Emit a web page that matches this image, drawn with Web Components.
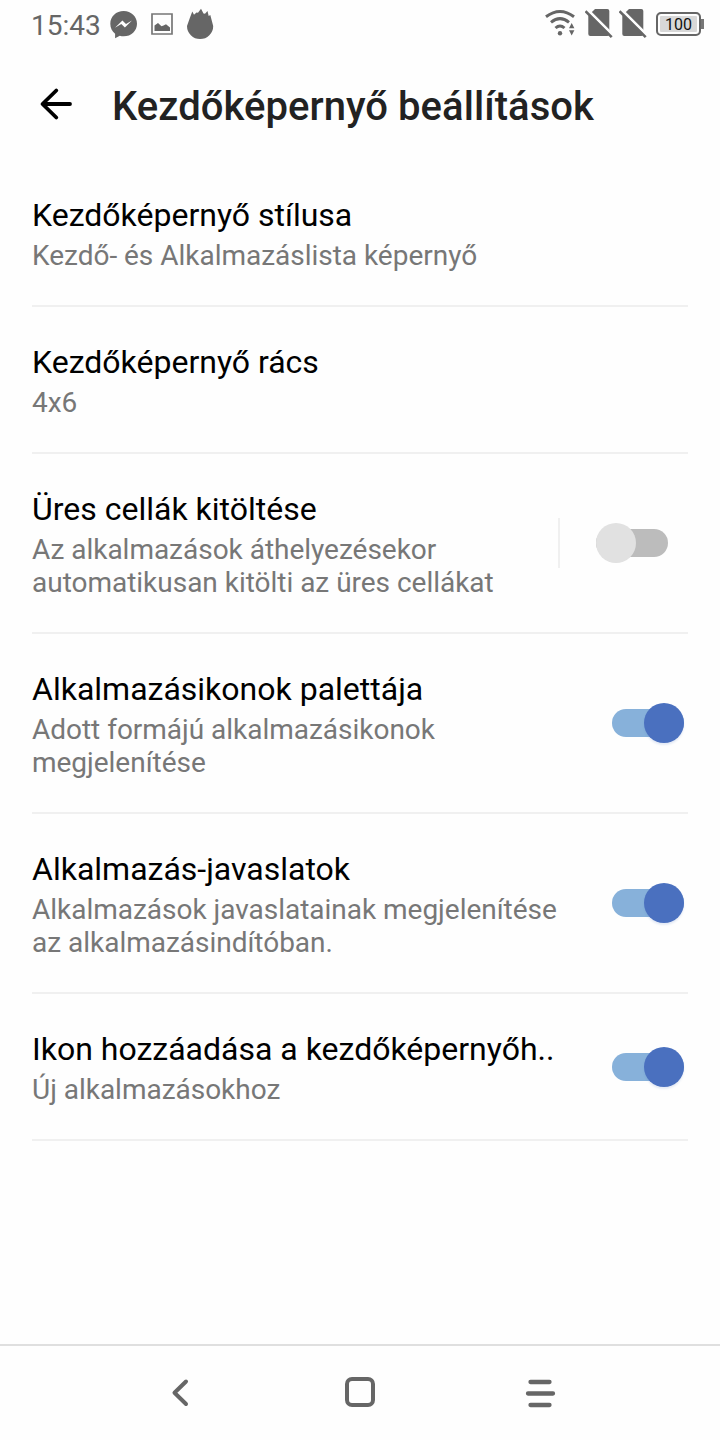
<!DOCTYPE html>
<html lang="hu">
<head>
<meta charset="utf-8">
<title>Kezdőképernyő beállítások</title>
<style>
  body {
    margin: 0;
    background-color: #fefefe;
    font-family: Roboto, "Noto Sans", sans-serif;
  }
</style>
</head>
<body>
<settings-screen></settings-screen>

<script>
const statusStyles = `
  <style>
    :host {
      display: flex;
      align-items: center;
      box-sizing: border-box;
      height: 48px;
      padding-left: 31px;
      padding-right: 16px;
      color: #666;
    }

    svg {
      display: block;
      flex: none;
      height: 48px;
      fill: #666;
    }

    .clock {
      width: 77px;
      font-size: 28px;
      line-height: 48px;
      padding-top: 2px;
      box-sizing: border-box;
      height: 48px;
    }

    .space {
      flex: 1;
    }

    .wifi {
      margin-right: 5px;
    }

    .battery {
      display: flex;
      align-items: center;
      margin-left: 3px;
    }

    .battery-body {
      box-sizing: border-box;
      width: 45px;
      height: 24px;
      border: 2px solid #666;
      border-radius: 5px;
      background: #d8d8d8;
      box-shadow: inset 0 0 0 2px #fefefe;
      color: #111;
      font-size: 16px;
      line-height: 21px;
      text-align: center;
    }

    .battery-cap {
      width: 3px;
      height: 10px;
      background: #777;
    }
  </style>
`;

class StatusBar extends HTMLElement {
  constructor() {
    super();
    this.root = this.attachShadow({ mode: 'open' });
    this.renderHTML();
  }

  renderHTML() {
    const noSim = `
      <svg width="34" viewBox="0 0 34 48">
        <path d="M10 9h12.300q2 0 2 2v23q0 2-2 2h-17q-2 0-2-2v-18.500z"/>
        <path d="M1 8.200l29 29" stroke="#fefefe" stroke-width="3"/>
        <path d="M0.500 11.200l26.200 26" stroke="#666" stroke-width="2.600"/>
      </svg>
    `;

    this.root.innerHTML = `
      ${statusStyles}
      <span class="clock">15:43</span>
      <svg width="34" viewBox="108 0 34 48">
        <path d="M123.700 11c-7.600 0-13.400 5.500-13.400 12.700 0 4.200 1.800 7.600 4.800 10v4.600l4.700-2.500c1.200.4 2.500.5 3.900.5 7.500 0 13.300-5.500 13.300-12.600s-5.800-12.700-13.300-12.700z"/>
        <path fill="#fefefe" d="M115 27.800l7.400-7.400 3.600 3.700 6-3.700-7.100 7.100-3.600-3.600z"/>
      </svg>
      <svg width="44" viewBox="142 0 44 48">
        <path fill="none" stroke="#777" stroke-width="1.700" d="M152 14h20v20h-20z"/>
        <path d="M154.500 31v-5.500l3.500-2.500 3.500 3.200 2-.8 2.500-1.200 4 3.300v3.500z"/>
      </svg>
      <svg width="30" viewBox="186 0 30 48">
        <path d="M187 26L190 17.500L192.300 11.500L194 14.800L196.500 12.500L198 12.800L201 8.800L203.500 13.500L205 13.800L207.500 11L208.700 16L210.300 15L213.200 26A13.100 13.100 0 0 1 187 26z"/>
      </svg>
      <span class="space"></span>
      <svg class="wifi" width="36" viewBox="544 0 36 48">
        <g fill="none" stroke="#666">
          <path stroke-width="3" d="M546 16.800q14-10.600 28 0"/>
          <path stroke-width="3" d="M551 22.300q9-7.400 18 0"/>
          <path stroke-width="3" d="M555.500 28q4.500-4 9 0"/>
        </g>
        <circle cx="560" cy="33.200" r="2.200"/>
        <path d="M569 28.200l2.700-5.200 2.700 5.200zM569 30.200h5.400l-2.700 5.200z"/>
      </svg>
      ${noSim}
      ${noSim}
      <div class="battery">
        <div class="battery-body">100</div>
        <div class="battery-cap"></div>
      </div>
    `;
  }
}

const headerStyles = `
  <style>
    :host {
      display: flex;
      align-items: center;
      height: 112px;
      padding-left: 36px;
    }

    svg {
      display: block;
      width: 40px;
      height: 40px;
      margin-right: 36px;
    }

    h1 {
      margin: 5px 0 0;
      font-size: 40px;
      font-weight: 500;
      line-height: 48px;
      letter-spacing: 0.05px;
      color: #222;
      white-space: nowrap;
    }
  </style>
`;

class ScreenHeader extends HTMLElement {
  constructor() {
    super();
    this.root = this.attachShadow({ mode: 'open' });
    this.renderHTML();
  }

  renderHTML() {
    this.root.innerHTML = `
      ${headerStyles}
      <svg viewBox="0 0 40 40">
        <path d="M20.300 6.500l-13.800 13.500 13.800 13.500M7 20h27" fill="none" stroke="#000" stroke-width="3.800" stroke-linecap="round" stroke-linejoin="round"/>
      </svg>
      <h1><slot></slot></h1>
    `;
  }
}

const switchStyles = `
  <style>
    :host {
      display: flex;
      align-items: center;
      flex: none;
      width: 72px;
      height: 40px;
      --track: #bcbcbc;
      --thumb: #e1e1e1;
    }

    :host([on]) {
      --track: #87b1da;
      --thumb: #4a70bf;
    }

    .track {
      display: flex;
      align-items: center;
      width: 72px;
      height: 28px;
      border-radius: 14px;
      background-color: var(--track);
    }

    .thumb {
      width: 40px;
      height: 40px;
      flex: none;
      border-radius: 50%;
      background-color: var(--thumb);
    }

    :host([on]) .thumb {
      margin-left: auto;
      box-shadow: 0 2px 2px rgba(74, 112, 191, 0.14);
    }
  </style>
`;

class ToggleSwitch extends HTMLElement {
  constructor() {
    super();
    this.root = this.attachShadow({ mode: 'open' });
    this.renderHTML();
  }

  renderHTML() {
    this.root.innerHTML = `
      ${switchStyles}
      <div class="track"><div class="thumb"></div></div>
    `;
  }
}

const rowStyles = `
  <style>
    :host {
      display: flex;
      align-items: center;
      margin-left: 32px;
      margin-right: 32px;
      padding-top: 36px;
      padding-bottom: 33px;
      border-bottom: 2px solid #f0f0f0;
    }

    .texts {
      width: 532px;
      flex: none;
    }

    .title {
      font-size: 32px;
      line-height: 38px;
      color: #000;
      white-space: nowrap;
    }

    .summary {
      margin-top: 5px;
      font-size: 28px;
      line-height: 33px;
      letter-spacing: -0.02px;
      color: #777;
    }

    .control {
      display: flex;
      align-items: center;
      flex: 1;
      margin-top: -3px;
    }

    ::slotted(toggle-switch) {
      margin: 0 4px 0 auto;
    }

    :host([split]) .texts {
      width: 526px;
    }

    :host([split]) .control {
      box-sizing: border-box;
      height: 50px;
      padding-right: 16px;
      border-left: 2px solid #f0f0f0;
    }
  </style>
`;

class SettingRow extends HTMLElement {
  constructor() {
    super();
    this.root = this.attachShadow({ mode: 'open' });
    this.renderHTML();
  }

  renderHTML() {
    this.root.innerHTML = `
      ${rowStyles}
      <div class="texts">
        <div class="title"><slot name="title"></slot></div>
        <div class="summary"><slot name="summary"></slot></div>
      </div>
      <div class="control"><slot></slot></div>
    `;
  }
}

const navStyles = `
  <style>
    :host {
      display: flex;
      justify-content: center;
      box-sizing: border-box;
      height: 96px;
      border-top: 2px solid #dfdfdf;
    }

    svg {
      display: block;
      width: 180px;
      height: 94px;
      fill: none;
      stroke: #666;
      stroke-width: 4;
      stroke-linecap: round;
      stroke-linejoin: round;
    }
  </style>
`;

class NavigationBar extends HTMLElement {
  constructor() {
    super();
    this.root = this.attachShadow({ mode: 'open' });
    this.renderHTML();
  }

  renderHTML() {
    this.root.innerHTML = `
      ${navStyles}
      <svg viewBox="0 0 180 94">
        <path d="M96 35.500l-11.500 11.300 11.500 11.200"/>
      </svg>
      <svg viewBox="0 0 180 94">
        <rect x="77" y="33" width="26" height="26" rx="5"/>
      </svg>
      <svg viewBox="0 0 180 94">
        <path d="M80.500 36h19M78 47.500h25M80.500 59h19" stroke-width="4.300"/>
      </svg>
    `;
  }
}

const screenStyles = `
  <style>
    :host {
      display: flex;
      flex-direction: column;
      width: 720px;
      height: 1440px;
      overflow: hidden;
    }

    main {
      flex: 1;
    }
  </style>
`;

const settings = [
  { title: 'Kezdőképernyő stílusa', summary: 'Kezdő- és Alkalmazáslista képernyő' },
  { title: 'Kezdőképernyő rács', summary: '4x6' },
  {
    title: 'Üres cellák kitöltése',
    summary: 'Az alkalmazások áthelyezésekor automatikusan kitölti az üres cellákat',
    toggle: 'off',
    split: true,
  },
  {
    title: 'Alkalmazásikonok palettája',
    summary: 'Adott formájú alkalmazásikonok megjelenítése',
    toggle: 'on',
  },
  {
    title: 'Alkalmazás-javaslatok',
    summary: 'Alkalmazások javaslatainak megjelenítése az alkalmazásindítóban.',
    toggle: 'on',
  },
  { title: 'Ikon hozzáadása a kezdőképernyőh..', summary: 'Új alkalmazásokhoz', toggle: 'on' },
];

class SettingsScreen extends HTMLElement {
  constructor() {
    super();
    this.root = this.attachShadow({ mode: 'open' });
    this.renderHTML();
  }

  renderHTML() {
    const rowsHTML = settings.reduce((acc, row) => {
      acc += `
        <setting-row ${row.split ? 'split' : ''}>
          <span slot="title">${row.title}</span>
          <span slot="summary">${row.summary}</span>
          ${row.toggle ? `<toggle-switch ${row.toggle === 'on' ? 'on' : ''}></toggle-switch>` : ''}
        </setting-row>
      `;
      return acc;
    }, '');

    this.root.innerHTML = `
      ${screenStyles}
      <status-bar></status-bar>
      <screen-header>Kezdőképernyő beállítások</screen-header>
      <main>${rowsHTML}</main>
      <navigation-bar></navigation-bar>
    `;
  }
}

customElements.define('status-bar', StatusBar);
customElements.define('screen-header', ScreenHeader);
customElements.define('toggle-switch', ToggleSwitch);
customElements.define('setting-row', SettingRow);
customElements.define('navigation-bar', NavigationBar);
customElements.define('settings-screen', SettingsScreen);
</script>
</body>
</html>
